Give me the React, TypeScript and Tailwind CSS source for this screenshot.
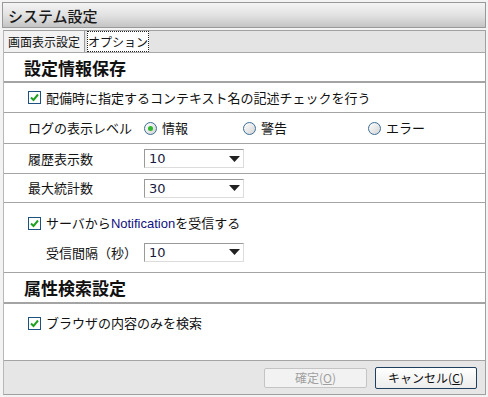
import React from "react";

const font = { fontFamily: '"Noto Sans CJK JP", "Noto Sans", sans-serif' };

function Check() {
  return (
    <span className="w-[13px] h-[13px] border border-[#1c5180] bg-white flex items-center justify-center shrink-0">
      <svg width="9" height="9" viewBox="0 0 9 9">
        <path d="M1 4.5 L3.5 7 L8 1.5" stroke="#21a121" strokeWidth="2" fill="none" />
      </svg>
    </span>
  );
}

function Radio({ on }: { on?: boolean }) {
  return (
    <span className="w-[13px] h-[13px] rounded-full border border-[#3c6d94] bg-gradient-to-br from-[#ffffff] to-[#d4d4d4] flex items-center justify-center shrink-0">
      {on && <span className="w-[5px] h-[5px] rounded-full bg-[#2db82d]" />}
    </span>
  );
}

function Select({ value }: { value: string }) {
  return (
    <div className="w-[100px] h-[19px] border-t border-l border-[#9a9a9a] border-r border-r-[#dcdcdc] border-b border-b-[#dcdcdc] bg-white flex items-center justify-between pl-[4px] pr-[3px]">
      <span className="text-[13px] text-[#1a1a40] leading-none" style={{ fontFamily: '"DejaVu Sans", sans-serif' }}>{value}</span>
      <svg width="11" height="6" viewBox="0 0 11 6">
        <path d="M0 0 L11 0 L5.5 6 Z" fill="#222" />
      </svg>
    </div>
  );
}

export default function App() {
  return (
    <div className="w-[488px] h-[397px] bg-[#f3f3f3] pt-[2px] pl-[2px] pr-[2px]" style={font}>
      <div className="h-[393px] flex flex-col">
        {/* タイトル */}
        <div className="h-[26px] border border-[#999] bg-gradient-to-b from-[#f4f4f4] via-[#e2e2e2] to-[#c4c4c4] flex items-center px-[5px]">
          <span className="text-[15px] text-[#1a1a1a] font-medium leading-none">システム設定</span>
        </div>

        <div className="flex-1 flex flex-col mt-[2px] border border-[#a0a0a0] border-l-[#b8b8b8] ml-[1px]">
          {/* タブ */}
          <div className="h-[22px] bg-[#e4e4e4] flex items-stretch border-b border-[#a8a8a8]">
            <div className="w-[81px] bg-[#f2f2f2] border-r border-[#9a9a9a] flex items-center justify-center text-[12px] text-[#111]">
              画面表示設定
            </div>
            <div className="ml-[2px] w-[62px] bg-white border border-dotted border-[#222] flex items-center justify-center text-[12px] text-[#111]">
              オプション
            </div>
          </div>

          {/* 内容 */}
          <div className="flex-1 bg-white flex flex-col text-[13px] text-[#111]">
            <div className="h-[30px] flex items-center pl-[20px] border-b-2 border-[#a4a4a4]">
              <span className="text-[17px] font-bold leading-none">設定情報保存</span>
            </div>
            <div className="h-[30px] flex items-center gap-[5px] pl-[24px] border-b border-[#a4a4a4]">
              <Check />
              <span>配備時に指定するコンテキスト名の記述チェックを行う</span>
            </div>
            <div className="h-[31px] flex items-center pl-[24px] border-b border-[#a4a4a4]">
              <span className="w-[116px]">ログの表示レベル</span>
              <div className="w-[99px] flex items-center gap-[5px]"><Radio on /><span>情報</span></div>
              <div className="w-[125px] flex items-center gap-[5px]"><Radio /><span>警告</span></div>
              <div className="flex items-center gap-[5px]"><Radio /><span>エラー</span></div>
            </div>
            <div className="h-[30px] flex items-center pl-[24px] border-b border-[#a4a4a4]">
              <span className="w-[116px]">履歴表示数</span>
              <Select value="10" />
            </div>
            <div className="h-[29px] flex items-center pl-[24px] border-b border-[#a4a4a4]">
              <span className="w-[116px]">最大統計数</span>
              <Select value="30" />
            </div>
            <div className="h-[70px] flex flex-col justify-center gap-[9px] pl-[24px] border-b border-[#a4a4a4]">
              <div className="flex items-center gap-[5px]">
                <Check />
                <span>
                  サーバから
                  <span className="text-[#101080]" style={{ fontFamily: '"Liberation Sans", sans-serif' }}>Notification</span>
                  を受信する
                </span>
              </div>
              <div className="flex items-center">
                <span className="w-[116px] pl-[18px]">受信間隔（秒）</span>
                <Select value="10" />
              </div>
            </div>
            <div className="h-[31px] flex items-center pl-[20px] border-b-2 border-[#a4a4a4]">
              <span className="text-[17px] font-bold leading-none">属性検索設定</span>
            </div>
            <div className="h-[38px] flex items-center gap-[5px] pl-[24px]">
              <Check />
              <span>ブラウザの内容のみを検索</span>
            </div>
          </div>

          {/* フッター */}
          <div className="h-[34px] bg-[#e6e6e6] border-t border-[#a4a4a4] flex items-center justify-end gap-[8px] pr-[8px]">
            <button className="w-[103px] h-[20px] rounded-[2px] border border-[#c4c4c4] bg-[#f2f2f2] text-[12px] text-[#a0a0a0] leading-none">
              確定(<span className="underline">O</span>)
            </button>
            <button className="w-[102px] h-[22px] rounded-[2px] border border-[#1f3f5f] bg-gradient-to-b from-[#ffffff] to-[#ececec] text-[12px] text-[#111] leading-none">
              キャンセル(<span className="underline">C</span>)
            </button>
          </div>
        </div>
      </div>
    </div>
  );
}
